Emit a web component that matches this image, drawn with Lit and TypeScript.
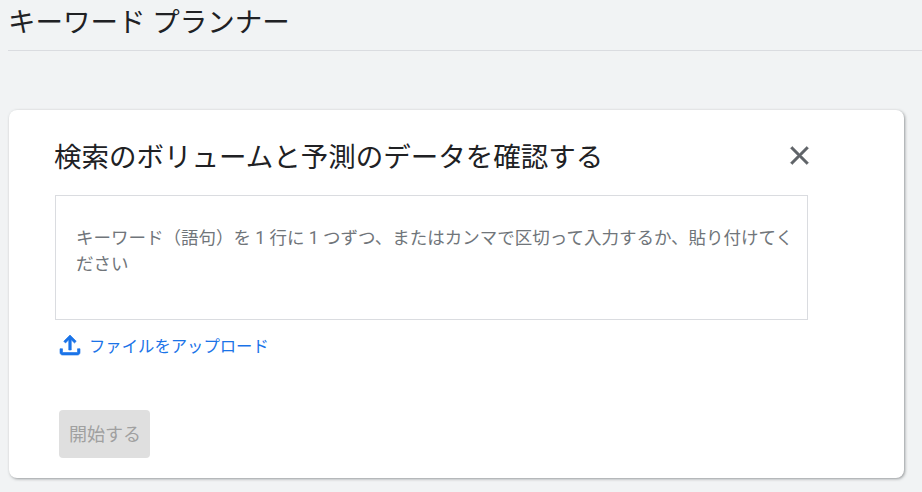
import { LitElement, html, css } from 'lit';
import { customElement } from 'lit/decorators.js';

const FONT = css`"Roboto", "Noto Sans CJK JP", sans-serif`;

@customElement('app-root')
export class AppRoot extends LitElement {
  static styles = css`
    :host {
      display: block;
      height: 492px;
      overflow: hidden;
      background: #f1f3f4;
      font-family: ${FONT};
      color: #202124;
    }

    .page-header {
      margin-left: 8px;
      height: 50px;
      border-bottom: 1px solid #dadce0;
      font-size: 27.5px;
      line-height: 46px;
    }

    .card {
      box-sizing: border-box;
      width: 895px;
      height: 368px;
      margin: 59px 0 0 9px;
      padding: 24px 46px;
      background: #fff;
      border-radius: 8px;
      box-shadow: 1px 1px 3px rgba(60, 64, 67, 0.5);
    }

    .card-head {
      display: flex;
      align-items: center;
      justify-content: space-between;
      width: 753px;
      height: 44px;
    }

    h2 {
      margin: 3px 0 0 -1px;
      font-size: 27.5px;
      font-weight: 400;
      line-height: 44px;
    }

    .close {
      width: 31px;
      height: 31px;
      margin: 0 -6.5px 2px 0;
      display: block;
      fill: #5f6368;
      stroke: #5f6368;
      stroke-width: 0.4;
    }

    .keywords {
      box-sizing: border-box;
      width: 753px;
      height: 125px;
      margin-top: 17px;
      padding: 29px 12px 0 20px;
      border: 1px solid #dadce0;
      font-size: 17.5px;
      line-height: 26px;
      color: #70757a;
    }

    .upload {
      display: flex;
      align-items: center;
      gap: 4px;
      margin-top: 12px;
      height: 26px;
      font-size: 16.35px;
      color: #1a73e8;
    }

    .upload svg {
      width: 30px;
      height: 30px;
      flex: none;
      fill: currentColor;
      stroke: currentColor;
      stroke-width: 0.5;
    }

    .start {
      display: block;
      width: 91px;
      height: 48px;
      margin: 52px 0 0 4px;
      padding: 0 0 2px 1px;
      border: none;
      border-radius: 4px;
      background: #dfdfdf;
      color: #a0a0a0;
      font-family: inherit;
      font-size: 18px;
    }
  `;

  render() {
    return html`
      <div class="page-header">キーワード プランナー</div>
      <section class="card">
        <div class="card-head">
          <h2>検索のボリュームと予測のデータを確認する</h2>
          <svg class="close" viewBox="0 0 24 24">
            <path d="M19 6.41 17.59 5 12 10.59 6.41 5 5 6.41 10.59 12 5 17.59 6.41 19 12 13.41 17.59 19 19 17.59 13.41 12z" />
          </svg>
        </div>
        <div class="keywords">キーワード（語句）を 1 行に 1 つずつ、またはカンマで区切って入力するか、貼り付けてください</div>
        <div class="upload">
          <svg viewBox="0 0 24 24"><path d="M18 15v3H6v-3H4v3c0 1.1.9 2 2 2h12c1.1 0 2-.9 2-2v-3h-2zM7 9l1.41 1.41L11 7.83V16h2V7.83l2.59 2.58L17 9l-5-5-5 5z" /></svg>
          <span>ファイルをアップロード</span>
        </div>
        <button class="start" disabled>開始する</button>
      </section>
    `;
  }
}
